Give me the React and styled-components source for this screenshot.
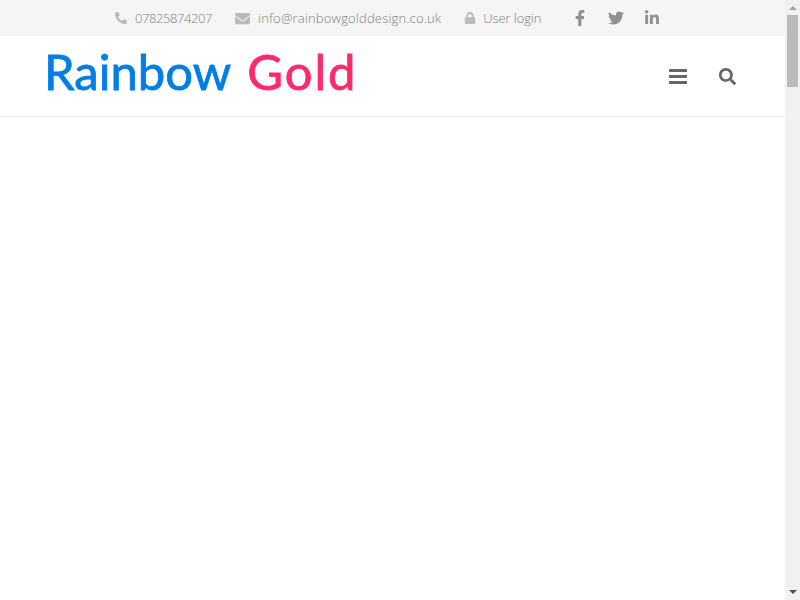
import React from "react";
import styled, { createGlobalStyle } from "styled-components";
import { FaPhoneAlt, FaEnvelope, FaLock, FaFacebookF, FaTwitter, FaLinkedinIn, FaSearch } from "react-icons/fa";

const GlobalStyle = createGlobalStyle`
  body {
    margin: 0;
    background: #fff;
    font-family: "Open Sans", sans-serif;
  }
`;

const Shell = styled.div`
  display: flex;
  height: 100vh;
  overflow: hidden;
`;

const Main = styled.div`
  flex: 1;
  min-width: 0;
`;

//top bar
const TopBar = styled.div`
  display: flex;
  align-items: center;
  height: 36px;
  padding-left: 115px;
  background: #f5f5f5;
  font-size: 13px;
  font-weight: 300;
  color: #808080;
`;

const Contact = styled.span`
  display: flex;
  align-items: center;
  gap: ${(props) => props.$gap || 8}px;
  margin-right: 23px;
  letter-spacing: ${(props) => props.$spacing || 0}px;
  svg {
    color: #bbb;
    font-size: ${(props) => props.$icon || 12}px;
  }
`;

const Socials = styled.div`
  display: flex;
  align-items: center;
  gap: 20px;
  margin-left: 8px;
  color: #919191;
  font-size: 16px;
`;

//header
const Header = styled.header`
  display: flex;
  align-items: center;
  justify-content: space-between;
  height: 80px;
  padding: 0 49px 0 44px;
  border-bottom: 1px solid #eee;
`;

const Logo = styled.div`
  font-family: "Lato", sans-serif;
  font-size: 49px;
  line-height: 72px;
  margin-bottom: 10px;
  white-space: nowrap;
  color: #007ee5;
  -webkit-text-stroke: 0.8px currentColor;
`;

const Gold = styled.span`
  color: #ff2a6d;
  margin-left: 16px;
  letter-spacing: 2px;
`;

const Tools = styled.div`
  display: flex;
  align-items: center;
  gap: 32px;
  color: #666;
  font-size: 17px;
`;

const App = () => {
  return (
    <Shell>
      <GlobalStyle />
      <Main>
        <TopBar>
          <Contact $spacing={-0.42}><FaPhoneAlt />07825874207</Contact>
          <Contact $icon={15} $spacing={0.18}><FaEnvelope />info@rainbowgolddesign.co.uk</Contact>
          <Contact $spacing={-0.1} $gap={7}><FaLock />User login</Contact>
          <Socials>
            <FaFacebookF />
            <FaTwitter />
            <FaLinkedinIn />
          </Socials>
        </TopBar>
        <Header>
          <Logo>Rainbow<Gold>Gold</Gold></Logo>
          <Tools>
            <svg width="18" height="15" viewBox="0 0 18 15" fill="currentColor">
              <rect width="18" height="3" />
              <rect y="6" width="18" height="3" />
              <rect y="12" width="18" height="3" />
            </svg>
            <FaSearch />
          </Tools>
        </Header>
      </Main>
      <ScrollBar>
        <ScrollTop>
          <Arrow />
          <Thumb />
        </ScrollTop>
        <ScrollTop>
          <Arrow $down />
        </ScrollTop>
      </ScrollBar>
    </Shell>
  );
};

//scrollbar
const ScrollBar = styled.div`
  display: flex;
  flex-direction: column;
  justify-content: space-between;
  width: 15px;
  background: #f1f1f1;
`;

const ScrollTop = styled.div`
  display: flex;
  flex-direction: column;
  align-items: center;
`;

const Arrow = styled.div`
  width: 0;
  height: 0;
  margin: ${(props) => (props.$down ? "0 0 6px" : "6px 0 5px")};
  border-style: solid;
  border-color: transparent;
  border-width: ${(props) => (props.$down ? "4px 4px 0" : "0 4px 4px")};
  ${(props) => (props.$down ? "border-top-color: #505050;" : "border-bottom-color: #a3a3a3;")}
`;

const Thumb = styled.div`
  width: 11px;
  height: 72px;
  background: #bbb;
`;

export default App;
